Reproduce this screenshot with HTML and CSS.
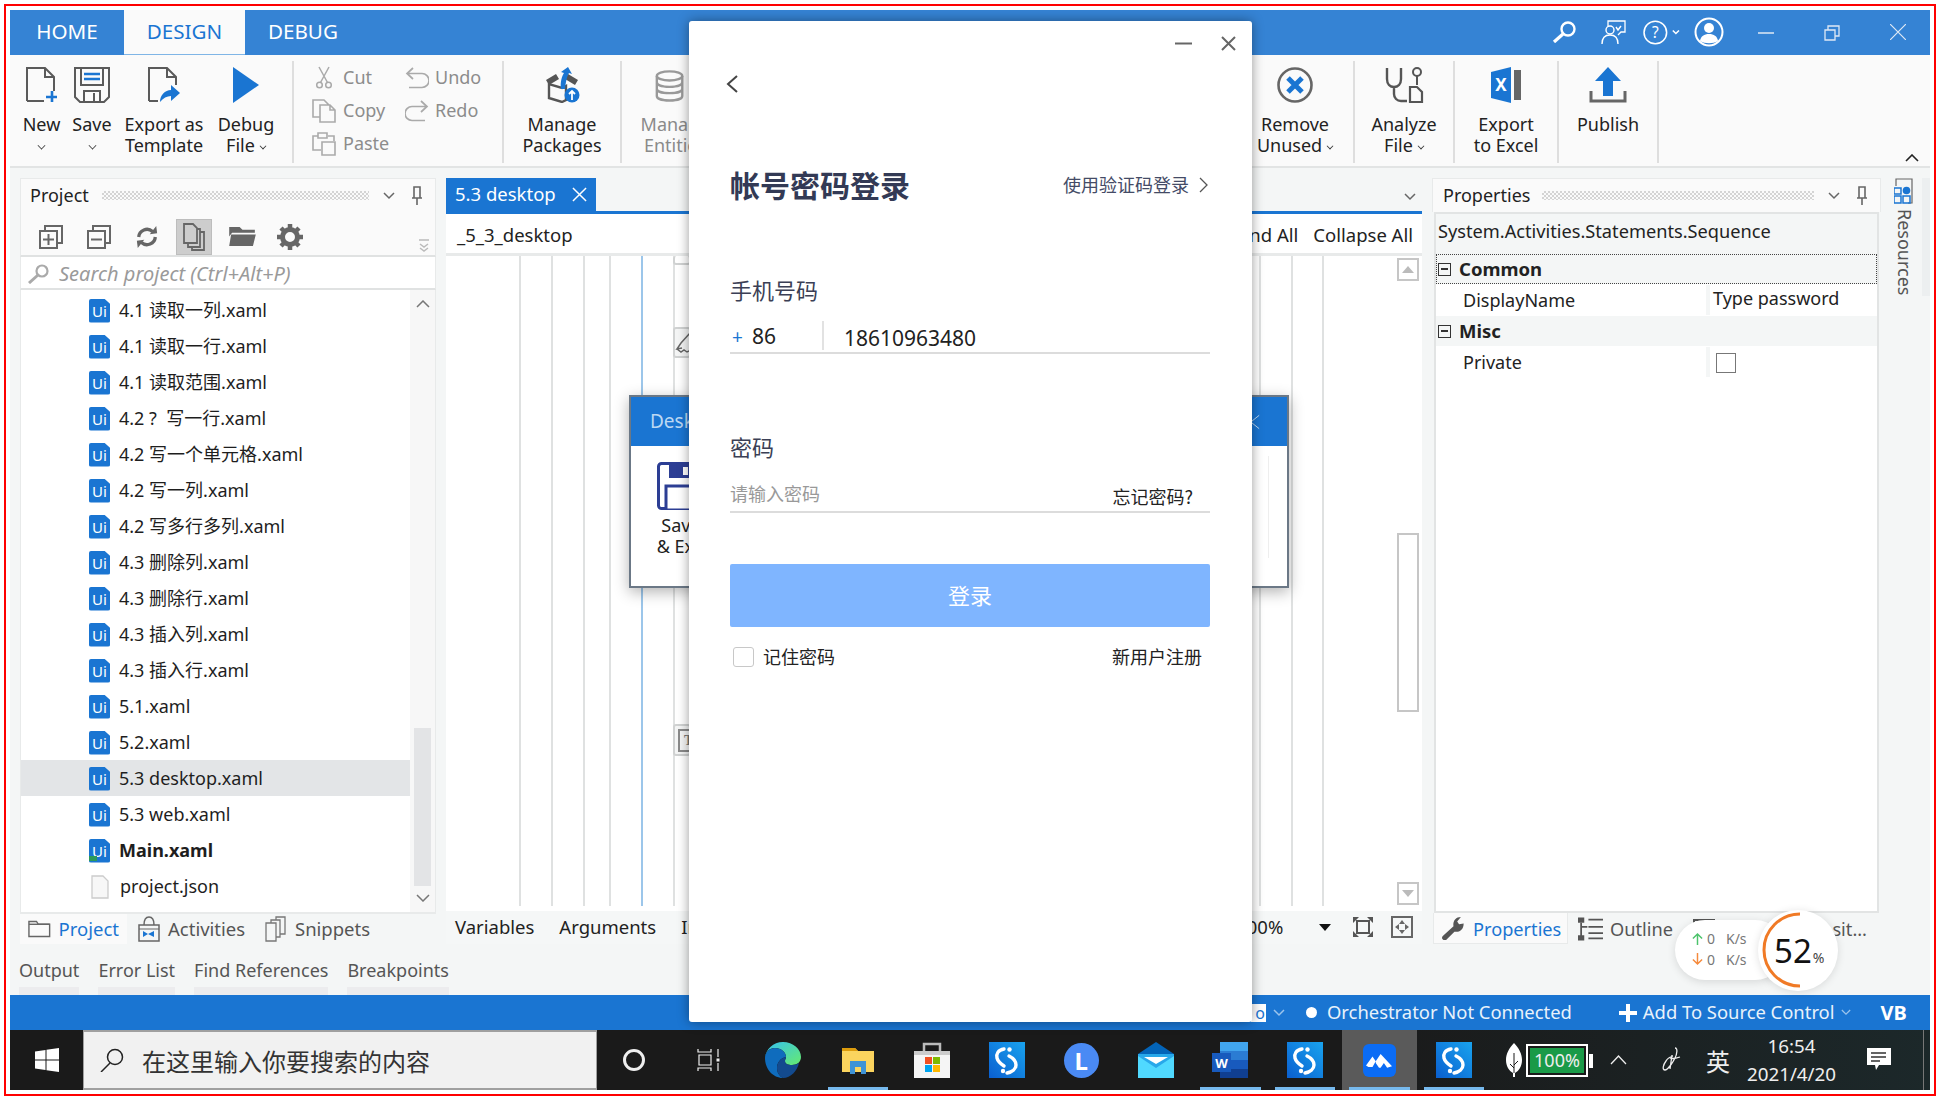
FILE: index.html
```html
<!DOCTYPE html>
<html lang="zh-CN">
<head>
<meta charset="utf-8">
<title>Studio</title>
<link rel="stylesheet" href="styles.css">
</head>
<body>
<div class="frame">
<div class="app">

<header class="titlebar">
  <nav class="tabs">
    <span class="ttab">HOME</span>
    <span class="ttab on">DESIGN</span>
    <span class="ttab">DEBUG</span>
  </nav>
  <div class="title-icons">
    <svg class="ti s1" viewBox="0 0 25 22"><circle cx="16" cy="8" r="6.5" fill="none" stroke="#fff" stroke-width="2.4"/><path d="M11 13 2 21" stroke="#fff" stroke-width="3.2"/></svg>
    <svg class="ti s2" viewBox="0 0 25 25"><path d="M7 6V1h17v11h-4l-3 3" fill="none" stroke="#fff" stroke-width="1.3"/><circle cx="9" cy="10" r="4" fill="none" stroke="#fff" stroke-width="1.4"/><path d="M1 24c0-6 3-9 8-9s8 3 8 9M15 7l2 3 3-4" fill="none" stroke="#fff" stroke-width="1.4"/></svg>
    <svg class="ti s3" viewBox="0 0 36 24"><circle cx="12" cy="12" r="11" fill="none" stroke="#fff" stroke-width="1.5"/><text x="12" y="17" class="helpq">?</text><path d="M29 10l3 3 3-3" fill="none" stroke="#fff" stroke-width="1.5"/></svg>
    <svg class="ti s4" viewBox="0 0 30 30"><circle cx="15" cy="15" r="13.5" fill="none" stroke="#fff" stroke-width="2"/><circle cx="15" cy="11" r="5" fill="#fff"/><path d="M6 24c1-5 4-7 9-7s8 2 9 7c-5 3-13 3-18 0z" fill="#fff"/></svg>
    <svg class="ti s5" viewBox="0 0 16 16"><path d="M0 8h16" stroke="#dfe9f5" stroke-width="1.5"/></svg>
    <svg class="ti s6" viewBox="0 0 16 16"><path d="M1 5h10v10H1zM4 5V1h11v10h-4" fill="none" stroke="#dfe9f5" stroke-width="1.3"/></svg>
    <svg class="ti s7" viewBox="0 0 16 16"><path d="M0 0l16 16M16 0 0 16" stroke="#dfe9f5" stroke-width="1.2"/></svg>
  </div>
</header>

<section class="ribbon">
  <div class="rgroup g1">
    <div class="rbtn w47"><svg class="ricon" viewBox="0 0 34 36"><path d="M2 34V1h18l9 9v14M2 34h17M20 1v9h9" fill="none" stroke="#5a5a5a" stroke-width="2"/><path d="M27 24v11M21 30h11" stroke="#1a75d2" stroke-width="2.6"/></svg><span>New</span><i class="chev"></i></div>
    <div class="rbtn w54"><svg class="ricon" viewBox="0 0 36 36"><path d="M1 1h34v29l-5 5H6l-5-5z" fill="none" stroke="#5a5a5a" stroke-width="2"/><path d="M7 1v17h22V1" fill="none" stroke="#5a5a5a" stroke-width="2"/><path d="M10 7h16M10 12h16" stroke="#1a75d2" stroke-width="2.6"/><path d="M10 35V24h16v11M20 26v9" fill="none" stroke="#5a5a5a" stroke-width="2"/></svg><span>Save</span><i class="chev"></i></div>
    <div class="rbtn w90"><svg class="ricon" viewBox="0 0 34 36"><path d="M2 34V1h18l9 9v8M2 34h9M20 1v9h9" fill="none" stroke="#5a5a5a" stroke-width="2"/><path d="M13 35c0-7 5-12 11-12v-5l9 8-9 8v-5c-4 0-8 2-11 6z" fill="#1a75d2"/></svg><span>Export as<br>Template</span></div>
    <div class="rbtn w74"><svg class="ricon" viewBox="0 0 28 36"><path d="M1 0l26 18L1 36z" fill="#1a75d2"/></svg><span>Debug<br>File<i class="chev inl"></i></span></div>
  </div>
  <div class="rgroup g2">
    <div class="rsmall"><svg viewBox="0 0 24 22"><circle cx="7.500" cy="18" r="2.800" fill="none" stroke="#aaa" stroke-width="1.500"/><circle cx="16.500" cy="18" r="2.800" fill="none" stroke="#aaa" stroke-width="1.500"/><path d="M8.500 15.500 17 0M15.500 15.500 7 0" stroke="#aaa" stroke-width="1.500"/></svg><span>Cut</span></div>
    <div class="rsmall"><svg viewBox="0 0 24 22"><path d="M8 1 2 6.500 8 12M2 6.500h15a7 7 0 0 1 0 14H4" fill="none" stroke="#aaa" stroke-width="1.700"/></svg><span>Undo</span></div>
    <div class="rsmall"><svg viewBox="0 0 24 24"><path d="M8 18H1V1h11l5 5M8 6h10l5 5v12H8zM18 6v5h5" fill="none" stroke="#aaa" stroke-width="1.600"/></svg><span>Copy</span></div>
    <div class="rsmall"><svg viewBox="0 0 24 22"><path d="M16 1l6 5.500L16 12M22 6.500H7a7 7 0 0 0 0 14h13" fill="none" stroke="#aaa" stroke-width="1.700"/></svg><span>Redo</span></div>
    <div class="rsmall"><svg viewBox="0 0 24 24"><path d="M9 18H1V4h5M16 4h6v5M6 1h9v5H6zM10 10h13v13H10z" fill="none" stroke="#aaa" stroke-width="1.600"/></svg><span>Paste</span></div>
  </div>
  <div class="rgroup g3">
    <div class="rbtn wf"><svg class="ricon" viewBox="0 0 36 36"><path d="M2 13 12 7l3 5-10 6zM34 13 24 7l-3 5 10 6z" fill="#555"/><path d="M5 17v14l13 4 4-2V19L18 21z" fill="none" stroke="#555" stroke-width="2.4"/><path d="M17 22c-1-7 1-13 3-16l-3-1 7-5 4 7-3-1c-2 3-3 8-4 16z" fill="#1a75d2"/><circle cx="28" cy="28" r="7.5" fill="#1a75d2"/><path d="M28 33v-9M25 27l3-3 3 3" fill="none" stroke="#fff" stroke-width="1.8"/></svg><span>Manage<br>Packages</span></div>
  </div>
  <div class="rgroup g4">
    <div class="rbtn w88 dim"><svg class="ricon" viewBox="0 0 44 36"><g fill="none" stroke="#999" stroke-width="2.6"><ellipse cx="16" cy="8" rx="14" ry="5"/><path d="M2 8v22c0 3 6 5 14 5s14-2 14-5V8M2 15c0 3 6 5 14 5s14-2 14-5M2 22c0 3 6 5 14 5s14-2 14-5"/></g></svg><span>Manage<br>Entities</span></div>
    <div class="rbtn w116"><svg class="ricon" viewBox="0 0 36 36"><circle cx="18" cy="18" r="16.5" fill="none" stroke="#666" stroke-width="2.6"/><path d="M11 11l14 14M25 11 11 25" stroke="#1a75d2" stroke-width="5"/></svg><span>Remove<br>Unused<i class="chev inl"></i></span></div>
  </div>
  <div class="rgroup g5">
    <div class="rbtn wf"><svg class="ricon" viewBox="0 0 38 36"><path d="M2 1v11c0 5 3 8 7 8s7-3 7-8V1M9 20v7c0 4 3 7 7 7h6" fill="none" stroke="#555" stroke-width="2.4"/><circle cx="32" cy="5" r="4" fill="none" stroke="#555" stroke-width="2"/><path d="M32 9v9" stroke="#555" stroke-width="2"/><path d="M25 35V20h7l5 5v10z" fill="none" stroke="#555" stroke-width="2.2"/></svg><span>Analyze<br>File<i class="chev inl"></i></span></div>
  </div>
  <div class="rgroup g6">
    <div class="rbtn wf"><svg class="ricon" viewBox="0 0 32 36"><path d="M1 5 21 0v36L1 31z" fill="#1a75d2"/><path d="M24 3h7v30h-7z" fill="#666"/><text x="11" y="24" class="xl">X</text></svg><span>Export<br>to Excel</span></div>
  </div>
  <div class="rgroup g7">
    <div class="rbtn wf"><svg class="ricon" viewBox="0 0 36 36"><path d="M18 0 31 14h-8v15H13V14H5z" fill="#1a75d2"/><path d="M1 24v10h34V24" fill="none" stroke="#666" stroke-width="3"/></svg><span>Publish</span></div>
  </div>
  <svg class="collapse" viewBox="0 0 14 8"><path d="M1 7l6-6 6 6" fill="none" stroke="#222" stroke-width="1.6"/></svg>
</section>

<main class="workspace">
  <aside class="panel project">
    <div class="panel-head"><span>Project</span><i class="dots"></i><svg class="pv" viewBox="0 0 12 8"><path d="M1 1l5 5 5-5" fill="none" stroke="#666" stroke-width="1.5"/></svg><svg class="pin" viewBox="0 0 12 20"><path d="M3 1h6v11H3zM1 12h10M6 12v7" fill="none" stroke="#666" stroke-width="1.6"/></svg></div>
    <div class="proj-tools">
      <svg class="tl" viewBox="0 0 24 24"><path d="M6 6V1h17v17h-5" fill="none" stroke="#666" stroke-width="2"/><path d="M1 6h17v17H1z" fill="none" stroke="#666" stroke-width="2"/><path d="M9.500 9v11M4 14.500h11" stroke="#666" stroke-width="2"/></svg>
      <svg class="tl" viewBox="0 0 24 24"><path d="M6 6V1h17v17h-5" fill="none" stroke="#666" stroke-width="2"/><path d="M1 6h17v17H1z" fill="none" stroke="#666" stroke-width="2"/><path d="M4 14.500h11" stroke="#666" stroke-width="2"/></svg>
      <svg class="tl" viewBox="0 0 26 24"><path d="M4 12a9 9 0 0 1 15-6M22 12a9 9 0 0 1-15 6" fill="none" stroke="#666" stroke-width="3.600"/><path d="M16 9l8-1-1-8zM10 15l-8 1 1 8z" fill="#666"/></svg>
      <span class="tl-on"><svg viewBox="0 0 22 28"><path d="M1 1h9l4 4v15H1zM14 6h3v18H5v-4M17 9h4v18H9v-3" fill="none" stroke="#666" stroke-width="1.800"/></svg></span>
      <svg class="tl fold" viewBox="0 0 28 20"><path d="M0 0h11l3 3h13v3H3L0 10zM2 8h26l-3 12H0z" fill="#666"/></svg>
      <svg class="tl gear" viewBox="0 0 26 26"><circle cx="13" cy="13" r="7.500" fill="none" stroke="#666" stroke-width="5"/><path d="M13 0v5M13 21v5M0 13h5M21 13h5M4 4l3.500 3.500M18.500 18.500 22 22M22 4l-3.500 3.500M7.500 18.500 4 22" stroke="#666" stroke-width="4.500"/></svg>
      <svg class="dbl" viewBox="0 0 12 14"><path d="M1 1h10M2 5l4 3 4-3M2 9l4 3 4-3" fill="none" stroke="#bbb" stroke-width="1.500"/></svg>
    </div>
    <div class="proj-search"><svg viewBox="0 0 22 20"><circle cx="14" cy="7" r="5.500" fill="none" stroke="#aaa" stroke-width="2.200"/><path d="M10 11 1 19" stroke="#aaa" stroke-width="3"/></svg><span>Search project (Ctrl+Alt+P)</span></div>
    <div class="proj-body">
      <ul class="files">
        <li><b class="ui">Ui</b>4.1 读取一列.xaml</li>
        <li><b class="ui">Ui</b>4.1 读取一行.xaml</li>
        <li><b class="ui">Ui</b>4.1 读取范围.xaml</li>
        <li><b class="ui">Ui</b>4.2 ?  写一行.xaml</li>
        <li><b class="ui">Ui</b>4.2 写一个单元格.xaml</li>
        <li><b class="ui">Ui</b>4.2 写一列.xaml</li>
        <li><b class="ui">Ui</b>4.2 写多行多列.xaml</li>
        <li><b class="ui">Ui</b>4.3 删除列.xaml</li>
        <li><b class="ui">Ui</b>4.3 删除行.xaml</li>
        <li><b class="ui">Ui</b>4.3 插入列.xaml</li>
        <li><b class="ui">Ui</b>4.3 插入行.xaml</li>
        <li><b class="ui">Ui</b>5.1.xaml</li>
        <li><b class="ui">Ui</b>5.2.xaml</li>
        <li class="sel"><b class="ui">Ui</b>5.3 desktop.xaml</li>
        <li><b class="ui">Ui</b>5.3 web.xaml</li>
        <li class="strong"><b class="ui main">Ui<em></em></b>Main.xaml</li>
        <li><svg class="jsonf" viewBox="0 0 18 24"><path d="M1 1h11l5 5v17H1z" fill="#f7f7f7" stroke="#ccc" stroke-width="1.300"/></svg>project.json</li>
      </ul>
      <div class="vscroll">
        <svg viewBox="0 0 14 8"><path d="M1 7l6-6 6 6" fill="none" stroke="#777" stroke-width="1.500"/></svg>
        <i class="vthumb"></i>
        <svg viewBox="0 0 14 8"><path d="M1 1l6 6 6-6" fill="none" stroke="#777" stroke-width="1.500"/></svg>
      </div>
    </div>
    <div class="ptabs">
      <span class="ptab on"><svg viewBox="0 0 24 18"><path d="M1 17V1h8l2 3h12v13z" fill="none" stroke="#666" stroke-width="1.500"/><path d="M1 4h22" stroke="#666" stroke-width="1.500"/></svg>Project</span>
      <span class="ptab"><svg viewBox="0 0 22 26"><path d="M1 9h20v16H1zM6 9c0-5 2-8 5-8s5 3 5 8" fill="none" stroke="#666" stroke-width="1.500"/><path d="M1 13h20" stroke="#666"/><path d="M5 15l5 3 6-3v6l-6-3-5 3z" fill="#1a75d2"/></svg>Activities</span>
      <span class="ptab"><svg viewBox="0 0 22 26"><path d="M1 25V7h10v18zM6 7V4h9v17h-4M11 4V1h9v17h-5" fill="none" stroke="#777" stroke-width="1.300"/></svg>Snippets</span>
    </div>
  </aside>

  <section class="editor">
    <div class="doc-tabs">
      <span class="doc-tab">5.3 desktop<svg viewBox="0 0 16 16"><path d="M1 1l14 14M15 1 1 15" stroke="#fff" stroke-width="1.600"/></svg></span>
      <svg class="dv" viewBox="0 0 12 8"><path d="M1 1l5 5 5-5" fill="none" stroke="#666" stroke-width="1.500"/></svg>
    </div>
    <div class="crumbs"><span>_5_3_desktop</span><span class="crumb-r"><span>Expand All</span><span>Collapse All</span></span></div>
    <div class="canvas">
      <div class="lines">
        <i class="l74"></i><i class="l32"></i><i class="l32"></i><i class="l26"></i><i class="l32 bl"></i><i class="l32"></i><i class="l586"></i><i class="l32"></i><i class="l31"></i>
      </div>
      <i class="ebox e1"></i>
      <div class="ebox e2"><svg viewBox="0 0 16 26"><path d="M16 3 6 14l-4 6 5-1M2 20l4 3 3-2 3 2 4-2" fill="none" stroke="#666" stroke-width="1.500"/></svg></div>
      <div class="ebox e3"><span class="tbox">T</span></div>
      <div class="evs">
        <span class="vb"><i class="tup"></i></span>
        <i class="evtrack"><i class="evthumb"></i></i>
        <span class="vb"><i class="tdn"></i></span>
      </div>
    </div>
    <div class="edfoot">
      <span class="ef1">Variables</span><span class="ef2">Arguments</span><span class="ef3">Imports</span>
      <span class="zoomv">100%</span><i class="zoomdd"></i>
      <svg class="fit f1" viewBox="0 0 22 22"><path d="M5 5h12v12H5z" fill="none" stroke="#555" stroke-width="2"/><path d="M1 7V1h6zM21 7V1h-6zM1 15v6h6zM21 15v6h-6z" fill="#555"/></svg>
      <svg class="fit" viewBox="0 0 22 22"><path d="M1 1h20v20H1z" fill="none" stroke="#666" stroke-width="2"/><path d="M11 4l3 4H8zM11 18l3-4H8zM4 11l4-3v6zM18 11l-4-3v6z" fill="#666"/></svg>
    </div>
  </section>

  <aside class="panel props">
    <div class="panel-head"><span>Properties</span><i class="dots"></i><svg class="pv" viewBox="0 0 12 8"><path d="M1 1l5 5 5-5" fill="none" stroke="#666" stroke-width="1.500"/></svg><svg class="pin" viewBox="0 0 12 20"><path d="M3 1h6v11H3zM1 12h10M6 12v7" fill="none" stroke="#666" stroke-width="1.600"/></svg></div>
    <div class="props-body">
      <div class="ptype">System.Activities.Statements.Sequence</div>
      <div class="pcat dotted"><i class="mbox"></i><b>Common</b></div>
      <div class="prow"><span>DisplayName</span><span class="val">Type password</span></div>
      <div class="pcat"><i class="mbox"></i><b>Misc</b></div>
      <div class="prow"><span>Private</span><span class="val"><i class="cbx"></i></span></div>
    </div>
    <div class="rtabs">
      <span class="rtab on"><svg viewBox="0 0 26 26"><path d="M1 25c-1-2 0-3 1-4l11-10c-1-5 2-10 8-10l-4 5 2 3 5-1c0 7-5 10-10 9L5 26c-2 1-3 0-4-1z" fill="#555"/></svg>Properties</span>
      <span class="rtab"><svg viewBox="0 0 24 22"><path d="M0 0h6v5H0zM0 17h6v5H0z" fill="#555"/><path d="M3 5v14M3 9h6M10 2h14M10 9h14M10 15h14M10 20h14" stroke="#555" stroke-width="1.700"/></svg>Outline</span>
      <span class="rtab third"><i class="t3icon"></i>sit...</span>
    </div>
  </aside>

  <aside class="sidebar">
    <svg viewBox="0 0 20 26"><path d="M2 8V1h16v24h-4" fill="none" stroke="#666" stroke-width="1.200"/><path d="M0 10h7v6H0zM0 18h7v7H0zM9 18h7v7H9z" fill="none" stroke="#1a75d2" stroke-width="1.500"/><circle cx="12.500" cy="12.500" r="3.800" fill="#1a75d2"/></svg>
    <span>Resources</span>
  </aside>
</main>

<div class="tools">
  <span>Output</span><span>Error List</span><span>Find References</span><span>Breakpoints</span>
</div>

<footer class="status">
  <span class="st-o">o</span><svg class="st-c" viewBox="0 0 12 8"><path d="M1 1l5 5 5-5" fill="none" stroke="#9cc4ec" stroke-width="1.500"/></svg>
  <i class="st-dot"></i><span class="st-orch">Orchestrator Not Connected</span>
  <svg class="st-plus" viewBox="0 0 18 18"><path d="M9 0v18M0 9h18" stroke="#fff" stroke-width="4"/></svg><span>Add To Source Control</span><svg class="st-c2" viewBox="0 0 12 8"><path d="M1 1l5 5 5-5" fill="none" stroke="#9cc4ec" stroke-width="1.500"/></svg>
  <b class="st-vb">VB</b>
</footer>

<div class="taskbar">
  <div class="start"><svg viewBox="0 0 24 24"><path d="M0 3.500 10.500 2v9.500H0zM11.500 1.800 24 0v11.500H11.500zM0 12.500h10.500V22L0 20.500zM11.500 12.500H24V24l-12.500-1.800z" fill="#fff"/></svg></div>
  <div class="tsearch"><svg viewBox="0 0 24 24"><circle cx="15" cy="9" r="7.500" fill="none" stroke="#222" stroke-width="1.500"/><path d="M10 15 1 24" stroke="#222" stroke-width="1.500"/></svg><span>在这里输入你要搜索的内容</span></div>
  <div class="slots">
    <div class="slot"><svg class="i24" viewBox="0 0 24 24"><circle cx="12" cy="12" r="9.500" fill="none" stroke="#eee" stroke-width="3"/></svg></div>
    <div class="slot"><svg class="i24" viewBox="0 0 24 24"><path d="M1 1v3h13V1M1 23v-3h13v3M2 7h12v10H2zM21 1v8M21 15v8" fill="none" stroke="#eee" stroke-width="1.200"/><path d="M19.500 10.500h3v3h-3z" fill="#eee"/></svg></div>
    <div class="slot"><svg class="i36" viewBox="0 0 36 36"><defs><linearGradient id="eg" x1="0" y1="0" x2="1" y2="1"><stop offset="0" stop-color="#35c1f1"/><stop offset="1" stop-color="#66eb6e"/></linearGradient></defs><path d="M18 0c10 0 18 7 18 15 0 5-4 8-9 8-4 0-7-1-7-4 0-2 1-2 1-4 0-5-5-9-11-9S1 10 0 16C1 7 8 0 18 0z" fill="url(#eg)"/><path d="M0 16c0-6 5-10 10-10 6 0 11 4 11 9-5 1-9 5-9 11 0 4 2 8 6 10C8 36 0 27 0 16z" fill="#0f6cbd"/><path d="M12 26c0-6 4-10 9-11 0 2-1 2-1 4 0 3 3 4 7 4 3 0 5-1 7-2-2 8-8 15-16 15-4-2-6-6-6-10z" fill="#134a8e"/></svg></div>
    <div class="slot run"><svg class="i-ex" viewBox="0 0 32 28"><path d="M0 2h13l3 3h16v21H0z" fill="#fbd45e"/><path d="M0 2h13l3 3H0z" fill="#dd9c0c"/><path d="M8 28V15h16v13h-5v-7h-6v7z" fill="#3f93d6"/></svg></div>
    <div class="slot"><svg class="i36" viewBox="0 0 36 36"><path d="M10 10V2h16v8" fill="none" stroke="#bbb" stroke-width="2.500"/><path d="M0 9h36v27H0z" fill="#f5f5f5"/><path d="M0 9h36v4H0z" fill="#ccc"/><path d="M11 15h7v7h-7z" fill="#f25022"/><path d="M19 15h7v7h-7z" fill="#7fba00"/><path d="M11 23h7v7h-7z" fill="#00a4ef"/><path d="M19 23h7v7h-7z" fill="#ffb900"/></svg></div>
    <div class="slot"><svg class="i36" viewBox="0 0 36 36"><use href="#slogo"/></svg></div>
    <div class="slot"><span class="llogo">L</span></div>
    <div class="slot"><svg class="i36" viewBox="0 0 36 36"><path d="M18 0 36 12v24H0V12z" fill="#0364b8"/><path d="M0 12h36v24H0z" fill="#28a8ea"/><path d="M6 15h24L18 22z" fill="#fff"/><path d="M0 14 18 26 36 14v22H0z" fill="#50d9ff"/></svg></div>
    <div class="slot run"><svg class="i36" viewBox="0 0 36 36"><path d="M8 0h28v36H8z" fill="#41a5ee"/><path d="M8 9h28v9H8z" fill="#2b7cd3"/><path d="M8 18h28v9H8z" fill="#185abd"/><path d="M8 27h28v9H8z" fill="#103f91"/><path d="M0 11h19v19H0z" fill="#185abd"/><text x="9.500" y="26" class="wd">W</text></svg></div>
    <div class="slot run"><svg class="i36" viewBox="0 0 36 36"><use href="#slogo"/></svg></div>
    <div class="slot run active"><span class="mlogo"><svg viewBox="0 0 32 20"><path d="M0 16 8 5l4 6-4 7H3zM12 11l6-9 14 15-6 2-4-6-4 6h-2l-4-6z" fill="#fff"/></svg></span></div>
    <div class="slot run"><svg class="i36" viewBox="0 0 36 36"><use href="#slogo"/></svg></div>
  </div>
  <div class="tray">
    <svg class="leaf" viewBox="0 0 16 34"><path d="M8 0c5 5 8 11 8 17s-3 11-7 13v4H7v-4c-4-2-7-7-7-13S3 5 8 0z" fill="#fff"/><path d="M8 10v20M8 22l4-4M8 25l-4-4" stroke="#1a1a1a" stroke-width="1"/></svg>
    <div class="batt"><span>100%</span></div>
    <svg class="caret" viewBox="0 0 17 10"><path d="M1 9l7.500-8L16 9" fill="none" stroke="#eee" stroke-width="1.300"/></svg>
    <svg class="pen" viewBox="0 0 20 26"><path d="M13 1c3 0 2 6 0 10s-7 12-10 12-2-5 1-9c1-2 4-4 7-5M8 11c2 1 7 0 10-1M10 8l-2 14" fill="none" stroke="#eee" stroke-width="1.300"/></svg>
    <span class="ime">英</span>
    <div class="clock"><span>16:54</span><span>2021/4/20</span></div>
    <svg class="notif" viewBox="0 0 24 24"><path d="M0 0h24v17H12l-3 5-1-5H0z" fill="#fff"/><path d="M4 5h15M4 9h15M4 13h9" stroke="#333" stroke-width="1.400"/></svg>
    <i class="tb-end"></i>
  </div>
</div>

</div>
</div>

<svg class="defs" width="0" height="0"><defs><linearGradient id="sg" x1="0" y1="1" x2="1" y2="0"><stop offset="0" stop-color="#0a5fd0"/><stop offset="1" stop-color="#19a3ee"/></linearGradient><symbol id="slogo" viewBox="0 0 36 36"><path d="M0 0h36v36H0z" fill="url(#sg)"/><path d="M15 7C9 8 7 12 8 16c1 4 4 6 7 8M20 14c4 2 7 5 7 9s-4 7-9 8" fill="none" stroke="#fff" stroke-width="3.400" stroke-linecap="round"/><circle cx="20.500" cy="7.500" r="2.200" fill="#fff"/><circle cx="14" cy="29" r="2.200" fill="#fff"/></symbol></defs></svg>

<!-- behind dialog -->
<div class="desk-win">
  <div class="desk-title"><span>Desktop</span><svg viewBox="0 0 12 18"><path d="M11 1 1 9l10 8" fill="none" stroke="#bcd8f3" stroke-width="1.200"/></svg></div>
  <div class="desk-body">
    <div class="desk-btn"><svg viewBox="0 0 48 48"><rect x="1.500" y="1.500" width="45" height="45" rx="3" fill="none" stroke="#2c3e94" stroke-width="3"/><path d="M12 1h36v15H12z" fill="#2c3e94"/><path d="M26 5h5v8h-5z" fill="#fff"/><path d="M9 24h38v24H9z" fill="#fff" stroke="#2c3e94" stroke-width="3"/></svg><span>Save<br>&amp; Exit</span></div>
    <i class="desk-line"></i>
  </div>
</div>

<div class="login">
  <div class="lg-ctrl">
    <svg class="lg-min" viewBox="0 0 17 3"><path d="M0 1.500h17" stroke="#666" stroke-width="2"/></svg>
    <svg class="lg-x" viewBox="0 0 15 15"><path d="M1 1l13 13M14 1 1 14" stroke="#666" stroke-width="2"/></svg>
  </div>
  <svg class="lg-back" viewBox="0 0 12 18"><path d="M11 1 2 9l9 8" fill="none" stroke="#444" stroke-width="2"/></svg>
  <div class="lg-head"><h1>帐号密码登录</h1><span class="lg-link">使用验证码登录<svg viewBox="0 0 9 16"><path d="M1 1l7 7-7 7" fill="none" stroke="#555" stroke-width="1.300"/></svg></span></div>
  <div class="lg-label l1">手机号码</div>
  <div class="lg-phone"><span class="lg-cc"><em>+</em>86</span><span class="lg-num">18610963480</span></div>
  <div class="lg-label l2">密码</div>
  <div class="lg-pass"><span class="lg-ph">请输入密码</span><span class="lg-forgot">忘记密码?</span></div>
  <button class="lg-btn"><span>登录</span></button>
  <div class="lg-opts"><span class="lg-rem"><i class="lg-cb"></i>记住密码</span><span class="lg-reg">新用户注册</span></div>
</div>

<div class="netw">
  <div class="netw-pill">
    <div class="netw-row"><svg viewBox="0 0 12 14"><path d="M6 14V2M1 7l5-5 5 5" fill="none" stroke="#4cc36b" stroke-width="1.600"/></svg><span class="n0">0</span><span>K/s</span></div>
    <div class="netw-row"><svg viewBox="0 0 12 14"><path d="M6 0v12M1 7l5 5 5-5" fill="none" stroke="#f58a3c" stroke-width="1.600"/></svg><span class="n0">0</span><span>K/s</span></div>
  </div>
  <div class="netw-circle">
    <svg viewBox="0 0 80 80"><path d="M42 4A36 36 0 0 0 42 76" fill="none" stroke="#f07a26" stroke-width="3"/></svg>
    <span class="pct">52<small>%</small></span>
  </div>
</div>
</body>
</html>
```
FILE: styles.css
```css
:root { --ui: "Noto Sans", "Noto Sans CJK SC", sans-serif; --cjk: "Noto Sans CJK SC", sans-serif; --blue: #1a75d2; }
* { box-sizing: border-box; }
html, body { margin: 0; padding: 0; }
body { width: 1940px; height: 1100px; overflow: hidden; background: #fff; font: 18px/1.2 var(--ui); color: #222; position: relative; }
ul { list-style: none; margin: 0; padding: 0; }
em { font-style: normal; }
i { display: block; font-style: normal; }
.defs { position: absolute; }

.frame { position: absolute; left: 4px; top: 4px; width: 1932px; height: 1092px; border: 2px solid #f00; padding: 4px; }
.app { width: 1920px; height: 1080px; display: flex; flex-direction: column; background: #f4f6f6; overflow: hidden; }

/* title bar */
.titlebar { height: 45px; flex: none; background: #3583d4; display: flex; justify-content: space-between; }
.tabs { display: flex; }
.ttab { font-size: 20.600px; line-height: 43px; color: #fff; width: 114px; text-align: center; height: 45px; }
.ttab.on { background: #fafafa; color: var(--blue); width: 121px; border-bottom: 1px solid #7fb5e6; }
.ttab:nth-child(3) { width: 114px; text-align: left; padding-left: 23px; }
.title-icons { position: relative; width: 400px; }
.ti { position: absolute; }
.s1 { left: 22px; top: 11px; width: 25px; height: 22px; }
.s2 { left: 71px; top: 10px; width: 25px; height: 25px; }
.s3 { left: 113px; top: 10px; width: 37px; height: 25px; }
.s4 { left: 164px; top: 7px; width: 30px; height: 30px; }
.s5 { left: 228px; top: 15px; width: 16px; height: 16px; }
.s6 { left: 294px; top: 15px; width: 16px; height: 16px; }
.s7 { left: 360px; top: 14px; width: 16px; height: 16px; }
.helpq { font: 15px var(--ui); fill: #fff; text-anchor: middle; }

/* ribbon */
.ribbon { height: 113px; flex: none; background: #fafafa; border-bottom: 2px solid #e2e4e4; display: flex; align-items: flex-start; padding-top: 6px; }
.rgroup { display: flex; height: 102px; border-right: 2px solid #dedede; flex: none; }
.g1 { width: 284px; padding-left: 8px; }
.g2 { width: 210px; padding-left: 18px; display: grid; grid-template-columns: 93px 90px; grid-auto-rows: 33px; align-content: start; }
.g3 { width: 118px; }
.g4 { width: 733px; justify-content: space-between; }
.g5 { width: 100px; }
.g6 { width: 104px; }
.g7 { width: 100px; }
.rbtn { display: flex; flex-direction: column; align-items: center; padding-top: 6px; text-align: center; line-height: 21px; position: relative; flex: none; }
.rbtn > span { margin-top: 11px; }
.ricon { height: 36px; width: 40px; flex: none; }
.w47 { width: 47px; } .w54 { width: 54px; } .w90 { width: 90px; } .w74 { width: 74px; }
.w88 { width: 88px; margin-left: 9px; } .w116 { width: 116px; } .wf { width: 100%; }
.dim { color: #8a8a8a; }
.chev { width: 7px; height: 7px; border: solid #333; border-width: 0 1.500px 1.500px 0; transform: rotate(45deg) scale(.8); margin-top: 7px; }
.chev.inl { display: inline-block; margin: 0 0 3px 5px; width: 6px; height: 6px; }
.rsmall { display: flex; align-items: center; color: #8c8c8c; font-size: 18px; }
.rsmall svg { width: 24px; height: 24px; margin-right: 7px; flex: none; }
.rsmall:nth-child(even) svg { margin-right: 6px; }
.collapse { margin-left: auto; margin-right: 11px; align-self: flex-end; width: 14px; height: 8px; margin-bottom: 4px; }
.xl { font: 700 17px var(--ui); fill: #fff; text-anchor: middle; }
.wd { font: 700 13px var(--ui); fill: #fff; text-anchor: middle; }

/* workspace */
.workspace { height: 776px; flex: none; display: flex; padding: 10px 0 0 10px; gap: 10px; }
.panel { display: flex; flex-direction: column; height: 766px; flex: none; }
.project { width: 416px; }
.panel-head { height: 34px; flex: none; display: flex; align-items: center; background: #fafafa; border: 1px solid #e8eaea; border-bottom: 0; padding-left: 9px; }
.dots { height: 9px; background-image: repeating-conic-gradient(#d4d4d4 0 25%, #fafafa 0 50%); background-size: 4px 4px; }
.project .dots { width: 267px; margin-left: 13px; }
.pv { width: 12px; height: 8px; margin-left: 14px; }
.pin { width: 12px; height: 20px; margin-left: 16px; }
.proj-tools { height: 45px; flex: none; display: flex; align-items: center; padding: 6px 0 0 18px; position: relative; background: #fafafa; border: solid #e8eaea; border-width: 0 1px; border-bottom: 2px solid #e0e2e2; gap: 24px; }
.tl { width: 24px; height: 24px; flex: none; }
.tl-on { width: 36px; height: 36px; background: #cdcdcd; border: 1px solid #bdbdbd; display: flex; align-items: center; justify-content: center; margin: 0 -7px 0 -7px; }
.tl-on svg { width: 22px; height: 28px; }
.fold { width: 27px; height: 19px; }
.gear { width: 26px; height: 26px; margin-left: -3px; }
.dbl { position: absolute; right: 5px; bottom: 2px; width: 12px; height: 14px; }
.proj-search { height: 33px; flex: none; display: flex; align-items: center; background: #fff; padding: 3px 0 0 7px; border: solid #e8eaea; border-width: 0 1px; border-bottom: 2px solid #e0e2e2; }
.proj-search svg { width: 22px; height: 20px; margin-right: 9px; }
.proj-search span { font-style: italic; color: #9a9a9a; font-size: 20px; white-space: nowrap; }
.proj-body { height: 624px; flex: none; display: flex; background: #fff; border: solid #e8eaea; border-width: 0 1px 2px; }
.files { width: 389px; padding-top: 2px; flex: none; }
.files li { height: 36px; display: flex; align-items: center; padding: 1px 0 0 68px; font-size: 18px; color: #1e1e1e; white-space: pre; }
.files li.sel { background: #e3e5e7; }
.files li.strong { font-weight: 700; }
.ui { width: 21px; height: 24px; background: var(--blue); color: #fff; font: 400 15px/24px var(--ui); text-align: center; margin-right: 9px; flex: none; border-radius: 2px; clip-path: polygon(0 0, 72% 0, 100% 22%, 100% 100%, 0 100%); position: relative; }
.ui.main em { position: absolute; left: 0; bottom: 2px; width: 8px; height: 5px; background: #2c9a5a; }
.jsonf { width: 18px; height: 24px; margin: 0 11px 0 2px; }
.vscroll { flex: 1; background: #f7f7f7; display: flex; flex-direction: column; align-items: center; padding-top: 10px; }
.vscroll svg { width: 14px; height: 8px; flex: none; }
.vthumb { width: 17px; height: 158px; background: #e3e4e6; margin-top: 420px; margin-bottom: 8px; }
.ptabs { height: 30px; flex: none; display: flex; font-size: 18.500px; }
.ptab { display: flex; align-items: center; padding: 0 8px; color: #555; white-space: nowrap; }
.ptab svg { width: 24px; height: 26px; margin-right: 8px; }
.ptab.on { background: #fafafa; color: var(--blue); width: 107px; }
.ptab:nth-child(2) { width: 130px; padding-left: 11px; }
.ptab:nth-child(2) svg { width: 22px; }
.ptab:nth-child(3) svg { width: 22px; }

/* editor */
.editor { width: 976px; height: 766px; flex: none; display: flex; flex-direction: column; font-size: 18.500px; }
.doc-tabs { height: 36px; flex: none; border-bottom: 3px solid var(--blue); display: flex; align-items: flex-start; justify-content: space-between; }
.doc-tab { width: 150px; height: 33px; background: var(--blue); color: #fff; display: flex; align-items: center; padding-left: 9px; }
.doc-tab svg { width: 15px; height: 15px; margin-left: 16px; }
.dv { width: 12px; height: 8px; margin: 15px 6px 0 0; }
.crumbs { height: 42px; flex: none; background: #fff; border-bottom: 3px solid #e8eaea; display: flex; justify-content: space-between; align-items: center; padding: 4px 9px 0 11px; }
.crumb-r { display: flex; gap: 15px; }
.canvas { height: 655px; flex: none; background: #fff; display: flex; position: relative; }
.lines { display: flex; height: 650px; flex: none; }
.lines i { border-right: 2px solid #dfe1e1; flex: none; height: 650px; }
.lines i.bl { border-right-color: #9cc6ea; }
.l74 { width: 75px; } .l32 { width: 32px; } .l26 { width: 26px; } .l586 { width: 586px; } .l31 { width: 31px; }
.ebox { position: absolute; left: 227px; width: 18px; border: 2px solid #d0d2d2; background: #f4f5f5; border-radius: 3px; }
.e1 { top: 0; height: 9px; border-top: 0; background: #fff; }
.e2 { top: 71px; height: 31px; overflow: hidden; }
.e2 svg { width: 16px; height: 26px; display: block; }
.e3 { top: 468px; height: 32px; padding: 3px 0 0 3px; }
.tbox { display: block; width: 22px; height: 23px; border: 2px solid #8a8a8a; font: 700 14px/19px "Liberation Serif", serif; color: #777; padding-left: 4px; }
.evs { position: absolute; right: 3px; top: 2px; width: 22px; height: 647px; display: flex; flex-direction: column; }
.vb { height: 23px; border: 2px solid #c6c6c6; background: #fff; display: flex; align-items: center; justify-content: center; flex: none; }
.tup { border: 6px solid transparent; border-top: 0; border-bottom: 7px solid #bbb; }
.tdn { border: 6px solid transparent; border-bottom: 0; border-top: 7px solid #bbb; }
.evtrack { flex: 1; position: relative; background: #fff; }
.evthumb { position: absolute; left: 0; right: 0; top: 252px; height: 179px; border: 2px solid #c6c6c6; background: #fff; }
.edfoot { height: 33px; flex: none; background: #f5f7f7; display: flex; align-items: center; padding-bottom: 0; }
.ef1 { margin-left: 9px; }
.ef2 { margin-left: 25px; }
.ef3 { margin-left: 25px; width: 60px; white-space: nowrap; }
.zoomv { margin-left: 495px; color: #222; }
.zoomdd { border: 6px solid transparent; border-bottom: 0; border-top: 7px solid #111; margin-left: 36px; }
.fit { width: 22px; height: 22px; margin-left: 17px; margin-bottom: 2px; }
.f1 { margin-left: 21px; }

/* properties */
.props { width: 449px; }
.props .panel-head { padding-left: 10px; }
.props .dots { width: 272px; margin-left: 12px; }
.props-body { flex: 1; background: #fff; border: 2px solid #e2e4e4; margin: 0 2px; display: flex; flex-direction: column; }
.ptype { height: 40px; flex: none; background: #f4f6f6; padding: 0 0 0 2px; line-height: 34px; font-size: 18.200px; }
.pcat { height: 30px; flex: none; background: #f4f6f6; display: flex; align-items: center; padding-left: 2px; font-size: 18.500px; margin-top: 1px; }
.pcat.dotted { outline: 1px dotted #444; outline-offset: -1px; margin-top: 0; }
.mbox { width: 13px; height: 13px; border: 1.500px solid #333; margin-right: 8px; position: relative; }
.mbox::after { content: ""; position: absolute; left: 2px; right: 2px; top: 4.500px; height: 1.500px; background: #333; }
.pcat b { font-weight: 700; }
.prow { height: 30px; margin: 1px 0 0 18px; display: flex; gap: 4px; flex: none; background: #f4f6f6; }
.prow span { background: #fff; flex: 0 0 252px; padding: 1px 0 0 9px; line-height: 29px; }
.prow .val { flex: 1; padding: 0 0 0 3px; position: relative; line-height: 26px; }
.cbx { width: 20px; height: 20px; border: 1.500px solid #777; background: #fff; margin: 6px 0 0 3px; }
.rtabs { height: 31px; flex: none; display: flex; align-items: center; padding-left: 1px; font-size: 18.200px; }
.rtab { display: flex; align-items: center; height: 31px; color: #555; white-space: nowrap; padding-top: 3px; }
.rtab svg { width: 25px; height: 24px; margin-right: 7px; margin-top: -3px; }
.rtab.on { width: 135px; padding-left: 7px; color: var(--blue); background: #fafafa; border: 1px solid #e8eaea; border-top: 0; }
.rtab:nth-child(2) { margin-left: 10px; width: 115px; }
.third { flex: 1; justify-content: space-between; padding-right: 14px; }
.t3icon { width: 22px; height: 20px; border: 2px solid #555; margin-top: -3px; }
.sidebar { width: 44px; height: 118px; flex: none; margin-left: -5px; border-right: 8px solid #eceff0; display: flex; flex-direction: column; align-items: center; color: #555; }
.sidebar svg { width: 20px; height: 26px; margin-bottom: 5px; flex: none; }
.sidebar span { writing-mode: vertical-rl; font-size: 18px; }

/* tool row */
.tools { height: 51px; flex: none; display: flex; gap: 19px; padding: 16px 0 0 9px; font-size: 18px; }
.tools span { color: #555; height: 35px; line-height: 21px; background: linear-gradient(#f4f6f6 0 27px, #ececee 27px); white-space: nowrap; }

/* status */
.status { height: 35px; flex: none; background: var(--blue); color: #e8f2fb; display: flex; align-items: center; position: relative; font-size: 18.400px; padding-left: 1241px; white-space: nowrap; }
.st-o { width: 15px; height: 18px; background: #fff; color: var(--blue); line-height: 18px; text-align: right; font-size: 16px; padding-right: 1px; }
.st-c { width: 12px; height: 8px; margin-left: 7px; }
.st-dot { width: 11px; height: 11px; border-radius: 50%; background: #fff; margin-left: 21px; }
.st-orch { margin-left: 10px; }
.st-plus { width: 18px; height: 18px; margin-left: 47px; margin-right: 6px; }
.st-c2 { width: 10px; height: 7px; margin-left: 7px; }
.st-vb { margin-left: 29px; color: #fff; font-weight: 700; font-size: 20px; }

/* taskbar */
.taskbar { height: 60px; flex: none; display: flex; background: linear-gradient(90deg, #1a1a1a 70%, #1c282a); color: #eee; }
.start { width: 73px; display: flex; align-items: center; justify-content: center; padding-right: 2px; }
.start svg { width: 24px; height: 24px; margin-left: 2px; }
.tsearch { width: 514px; height: 60px; flex: none; background: #f1f1f1; border: 2px solid #a0a0a0; border-left-width: 1px; border-right-width: 1px; display: flex; align-items: center; padding-left: 16px; font: 24px var(--cjk); color: #333; }
.tsearch svg { width: 24px; height: 24px; margin-right: 18px; }
.slots { display: flex; flex: none; width: 894px; }
.slot { flex: 0 0 74.500px; display: flex; align-items: center; justify-content: center; position: relative; }
.slot.run::after { content: ""; position: absolute; left: 7px; right: 7px; bottom: 0; height: 3px; background: #76b9ed; }
.slot.active { background: #5a5a5a; }
.i24 { width: 24px; height: 24px; }
.i36 { width: 36px; height: 36px; }
.i-ex { width: 32px; height: 28px; }
.llogo { width: 35px; height: 35px; border-radius: 50%; background: #4a8af4; color: #fff; font: 700 24px/35px var(--ui); text-align: center; }
.mlogo { width: 33px; height: 33px; border-radius: 6px; background: #0b6cf5; display: flex; align-items: center; justify-content: center; }
.mlogo svg { width: 26px; height: 17px; }
.tray { flex: 1; display: flex; align-items: center; position: relative; }
.leaf { width: 16px; height: 34px; margin-left: 15px; flex: none; }
.batt { width: 62px; height: 33px; border: 2px solid #fff; background: #1a9a48; margin-left: 4px; outline: 2px solid #1a1a1a; outline-offset: -4px; position: relative; text-align: center; font: 18px/29px var(--ui); color: #eee; flex: none; }
.batt::after { content: ""; position: absolute; right: -7px; top: 8px; width: 4px; height: 14px; background: #fff; }
.caret { width: 17px; height: 10px; margin-left: 22px; flex: none; }
.pen { width: 20px; height: 26px; margin-left: 35px; flex: none; }
.ime { font: 24px var(--cjk); margin-left: 24px; }
.clock { display: flex; flex-direction: column; align-items: center; font-size: 18.800px; line-height: 28px; margin-left: 16px; width: 91px; flex: none; }
.notif { width: 24px; height: 24px; margin-left: 30px; flex: none; }
.tb-end { position: absolute; right: 6px; top: 0; bottom: 0; width: 1px; background: #777; }

/* background window */
.desk-win { position: absolute; left: 629px; top: 395px; width: 660px; height: 193px; background: #fff; border: 2px solid #6b7886; box-shadow: 0 4px 14px rgba(0,0,0,.3); z-index: 2; display: flex; flex-direction: column; }
.desk-title { height: 49px; flex: none; background: var(--blue); color: #bcd8f3; display: flex; justify-content: space-between; align-items: center; padding: 0 27px 0 19px; font-size: 19px; }
.desk-title svg { width: 10px; height: 18px; }
.desk-body { flex: 1; display: flex; justify-content: space-between; position: relative; }
.desk-btn { display: flex; flex-direction: column; align-items: flex-start; padding: 16px 0 0 26px; line-height: 21px; }
.desk-btn svg { width: 48px; height: 48px; }
.desk-btn span { margin: 5px -12px 0; text-align: center; width: 72px; white-space: nowrap; }
.desk-line { width: 1px; height: 102px; background: #eee; margin: 10px 18px 0 0; }

/* login */
.login { position: absolute; left: 689px; top: 21px; width: 563px; height: 1001px; background: #fff; border-radius: 3px; box-shadow: 0 0 12px rgba(0,0,0,.4); padding: 0 42px 0 41px; z-index: 3; display: flex; flex-direction: column; font-family: var(--cjk); color: #333a55; }
.lg-ctrl { height: 44px; flex: none; display: flex; justify-content: flex-end; align-items: center; margin-right: -26px; }
.lg-min { width: 17px; height: 3px; }
.lg-x { width: 15px; height: 15px; margin-left: 29px; }
.lg-back { width: 12px; height: 18px; margin: 10px 0 0 -4px; flex: none; }
.lg-head { margin-top: 71px; height: 40px; display: flex; justify-content: space-between; align-items: center; flex: none; }
h1 { margin: 0; font-size: 30px; font-weight: 700; color: #333a55; line-height: 40px; }
.lg-link { font-size: 18px; display: flex; align-items: center; color: #444b66; padding-top: 2px; }
.lg-link svg { width: 9px; height: 16px; margin: 0 2px 0 10px; }
.lg-label { font-size: 22px; line-height: 30px; flex: none; color: #3b3f55; }
.l1 { margin-top: 70px; }
.l2 { margin-top: 77px; }
.lg-phone { height: 34px; margin-top: 16px; border-bottom: 2px solid #dcdcdc; display: flex; align-items: center; flex: none; color: #222; }
.lg-cc { width: 94px; height: 29px; border-right: 2px solid #e2e2e2; font: 21px/30px var(--ui); padding-left: 2px; margin-top: -2px; }
.lg-cc em { color: var(--blue); font-size: 19px; margin-right: 9px; }
.lg-num { font: 21px var(--ui); margin: 4px 0 0 20px; }
.lg-pass { height: 35px; margin-top: 17px; border-bottom: 2px solid #dcdcdc; display: flex; justify-content: space-between; align-items: center; flex: none; font-size: 18px; }
.lg-ph { color: #999; margin-top: -1px; }
.lg-forgot { color: #222; margin-right: 17px; margin-top: 4px; }
.lg-btn { margin-top: 51px; height: 63px; flex: none; background: #7fb5ff; border: 0; border-radius: 2px; color: #fff; font: 22px var(--cjk); padding: 0 0 4px; }
.lg-opts { margin-top: 18px; height: 24px; display: flex; justify-content: space-between; align-items: center; font-size: 18px; color: #222; flex: none; }
.lg-rem { display: flex; align-items: center; }
.lg-cb { width: 21px; height: 20px; border: 1px solid #c8c8c8; border-radius: 3px; margin: 0 9px 0 3px; }
.lg-reg { margin-right: 8px; }

/* network widget */
.netw { position: absolute; left: 1675px; top: 910px; width: 163px; height: 81px; z-index: 4; }
.netw-pill { position: absolute; left: 0; top: 10px; width: 110px; height: 60px; background: #fff; border-radius: 30px; box-shadow: 0 2px 8px rgba(0,0,0,.12); padding: 8px 0 0 17px; font-size: 14px; color: #777; line-height: 21px; }
.netw-row { display: flex; align-items: center; height: 21px; }
.netw-row svg { width: 11px; height: 13px; margin-right: 4px; }
.n0 { width: 19px; }
.netw-circle { position: absolute; left: 83px; top: 0; width: 80px; height: 81px; border-radius: 50%; background: #fff; box-shadow: 0 1px 8px rgba(0,0,0,.12); }
.netw-circle svg { position: absolute; left: 0; top: 0; width: 80px; height: 80px; }
.pct { position: absolute; left: 16px; top: 18px; font-size: 33px; line-height: 46px; color: #111; white-space: nowrap; }
.pct small { font-size: 14px; margin-left: 1px; color: #444; }
```
